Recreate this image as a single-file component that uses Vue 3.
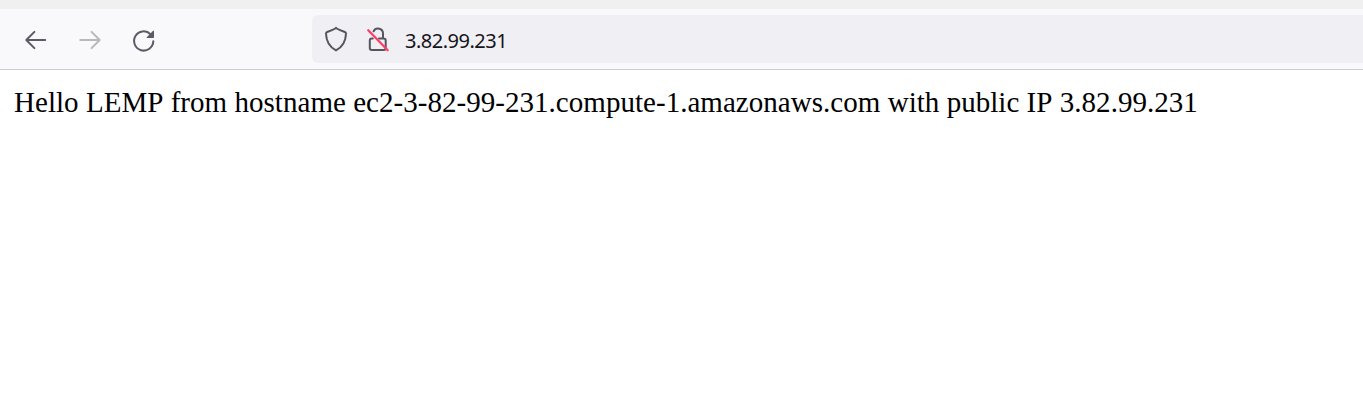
<script setup>
const address = '3.82.99.231'
const host = 'ec2-3-82-99-231.compute-1.amazonaws.com'
</script>

<template>
  <div class="browser">
    <div class="tabstrip"></div>
    <header class="toolbar">
      <nav class="nav">
        <svg class="icon" viewBox="0 0 40 40"><path d="M29.2 20H10.5M18.4 11.9L10.3 20l8.1 8.1" /></svg>
        <svg class="icon muted" viewBox="0 0 40 40"><path d="M10.3 20H29M21.6 11.9L29.7 20l-8.1 8.1" /></svg>
        <svg class="icon" viewBox="0 0 40 40">
          <path d="M29.3 21.3A9.6 9.6 0 1 1 26.5 14.2" />
          <path class="solid" d="M30 11v6.3q0 .7-.7.7h-6.3q-.8 0-.2-.7l6.3-6.5q.9-.8.9.2z" />
        </svg>
      </nav>
      <div class="urlbar">
        <svg class="icon shield" viewBox="0 0 40 40">
          <path d="M20 7.9Q21 9.2 28.8 12q1.3.5 1.2 1.8C29.7 22.5 26.6 27 20 30.4C13.4 27 10.3 22.5 10 13.8Q9.9 12.5 11.2 12Q19 9.2 20 7.9z" />
        </svg>
        <svg class="icon lock" viewBox="0 0 40 40">
          <path d="M14.8 18.5H13.8q-2 0-2 2v7.6q0 2 2 2H25.7q2 0 2-2v-7.6q0-2-2-2H21M25 18.5v-4.7A5 5 0 0 0 15.6 11.3" />
          <path class="slash" d="M10.2 10.2L29.7 30.2" />
        </svg>
        <span class="address">{{ address }}</span>
      </div>
    </header>
    <main class="page">Hello LEMP from hostname {{ host }} with public IP {{ address }}</main>
  </div>
</template>

<style scoped>
.browser {
  height: 418px;
  overflow: hidden;
  background: #fff;
}
.tabstrip {
  height: 9px;
  background: #f0f0f0;
}
.toolbar {
  display: flex;
  align-items: center;
  box-sizing: border-box;
  height: 61px;
  padding-left: 16px;
  background: #f9f9fb;
  border-bottom: 1px solid #ccc;
}
.nav {
  display: flex;
  gap: 14px;
  width: 296px;
  padding-top: 2px;
}
.icon {
  display: block;
  flex: none;
  width: 40px;
  height: 40px;
  fill: none;
  stroke: #5b5b66;
  stroke-width: 2;
  stroke-linecap: round;
  stroke-linejoin: round;
}
.muted {
  stroke: #b8b8be;
}
.solid {
  fill: #5b5b66;
  stroke: none;
}
.urlbar {
  display: flex;
  align-items: center;
  flex: 1;
  box-sizing: border-box;
  height: 48px;
  padding: 2px 0 0 4px;
  background: #f0eff4;
  border-radius: 6px 0 0 6px;
}
.shield {
  stroke: #55555e;
}
.lock {
  margin-left: 2px;
  stroke: #55555e;
}
.slash {
  stroke: #ff3b66;
  stroke-width: 2.2;
}
.address {
  margin-left: 7px;
  padding-top: 2px;
  color: #15141a;
  font: 20px/28px "Noto Sans", sans-serif;
  letter-spacing: -0.5px;
}
.page {
  padding: 15px 14px;
  color: #000;
  font: 29px/34px "Liberation Serif", serif;
  font-kerning: none;
  letter-spacing: 0.035px;
  white-space: nowrap;
}
</style>
